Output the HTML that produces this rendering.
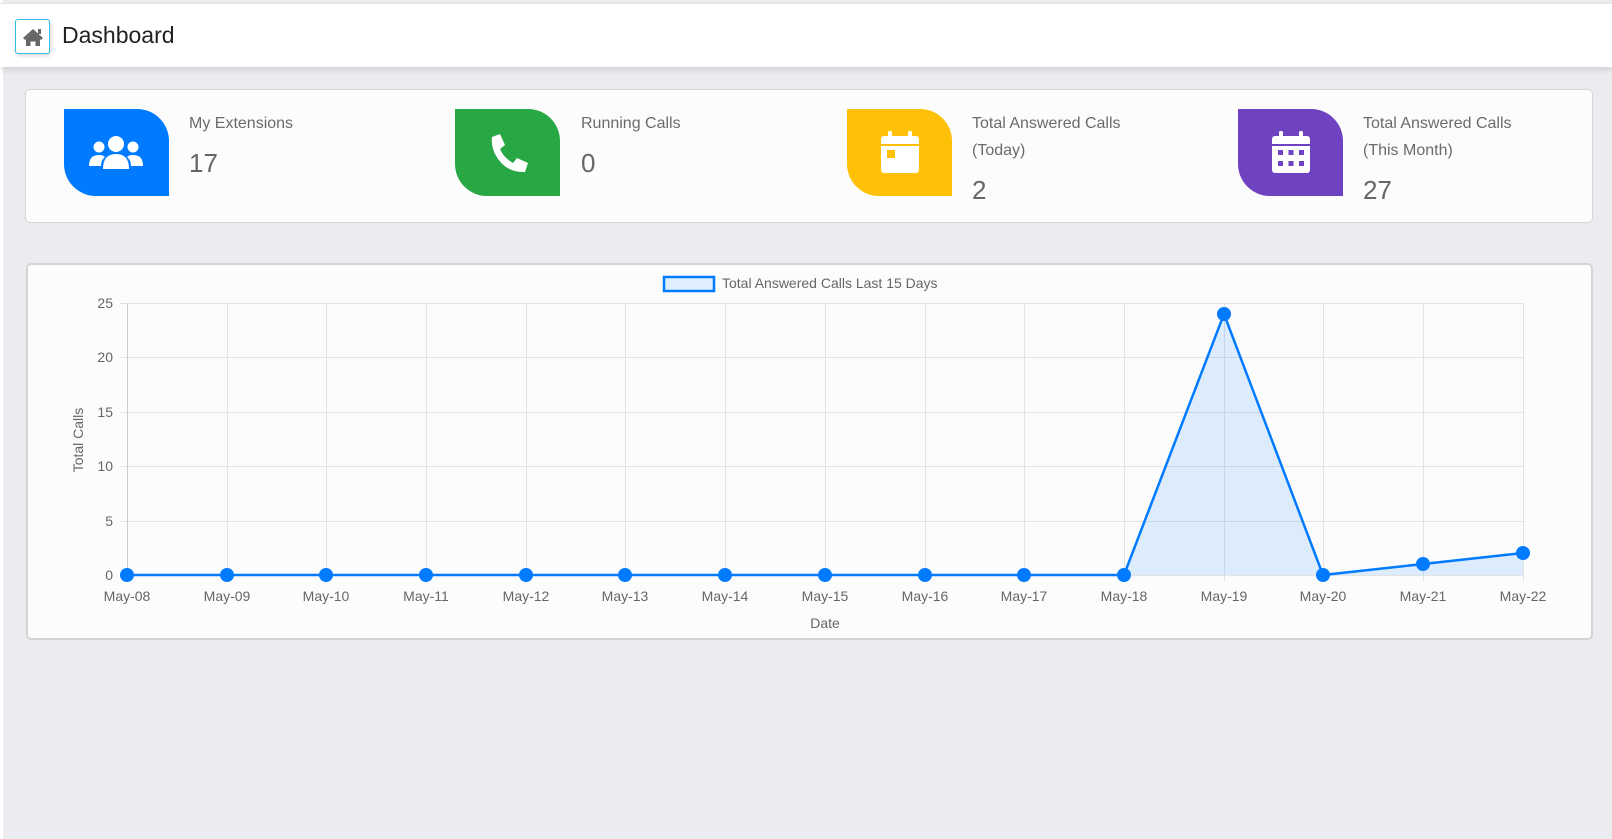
<!DOCTYPE html>
<html><head><meta charset="utf-8"><style>
*{box-sizing:border-box;margin:0;padding:0}
body{width:1612px;height:839px;background:#ebecf0;font-family:"Liberation Sans",sans-serif;position:relative;overflow:hidden}
.left{position:absolute;left:0;top:0;width:3px;height:839px;background:#fff}
.hdr{position:absolute;left:0;top:3px;width:1612px;height:64px;background:#fff;border-top:1px solid #e4e4e4;box-shadow:0 3px 6px rgba(0,0,0,.12)}
.home{position:absolute;left:15px;top:15px;width:35px;height:35px;border:1px solid #2fc0e8;border-radius:3px;box-shadow:1px 2px 4px rgba(0,0,0,.15);background:#fff}
.title{position:absolute;left:62px;top:18px;font-size:23px;color:#222}
.card{position:absolute;left:25px;top:89px;width:1568px;height:134px;background:#fcfcfc;border:1px solid #d6d6d6;border-radius:5px}
.ib{position:absolute;top:19px;width:105px;height:87px;border-radius:0 32px 0 32px}
.t{position:absolute;font-size:16px;color:#6b6b6b;line-height:27px}
.n{position:absolute;font-size:26px;color:#666}
.chart{position:absolute;left:26px;top:263px;width:1567px;height:377px;background:#fcfcfc;border:2px solid #d4d4d4;border-radius:5px}
</style></head><body>
<div class="left"></div>
<div class="hdr">
<div class="home"><svg width="35" height="35" viewBox="0 0 35 35"><path d="M7 18 L17 9 L27 18 L25 20 L17 13 L9 20Z" fill="#666"/><path d="M10 19 L17 13 L24 19 V26 H19.5 V21.5 H14.5 V26 H10Z" fill="#666"/><rect x="22" y="9" width="3" height="5" fill="#666"/></svg></div>
<div class="title">Dashboard</div>
</div>
<div class="card">
<div class="ib" style="left:38px;background:#007bff"><svg width="105" height="87" viewBox="0 0 105 87"><g fill="#fff"><circle cx="52" cy="35" r="8"/><circle cx="35" cy="38" r="5.5"/><circle cx="69" cy="38" r="5.5"/><path d="M39 60 Q39 45 52 45 Q65 45 65 60Z"/><path d="M25 57 Q25 46 35 46 Q39 46 41 48 Q37 51 37 57Z"/><path d="M79 57 Q79 46 69 46 Q65 46 63 48 Q67 51 67 57Z"/></g></svg></div>
<div class="t" style="left:163px;top:20px">My Extensions</div>
<div class="n" style="left:163px;top:58px">17</div>
<div class="ib" style="left:429px;background:#28a745"><svg width="105" height="87" viewBox="0 0 105 87"><path d="M37 28 L45 25 L50 36 L45 40 Q49 49 58 54 L62 49 L73 54 L70 63 Q50 64 40 45 Q36 37 37 28Z" fill="#fff"/></svg></div>
<div class="t" style="left:555px;top:20px">Running Calls</div>
<div class="n" style="left:555px;top:58px">0</div>
<div class="ib" style="left:821px;background:#ffc107"><svg width="105" height="87" viewBox="0 0 105 87"><g fill="#fff"><rect x="34" y="27" width="38" height="37" rx="3"/><rect x="41" y="22" width="4" height="9" rx="1.5"/><rect x="61" y="22" width="4" height="9" rx="1.5"/></g><rect x="34" y="35" width="38" height="2" fill="#ffc107"/><rect x="40" y="41" width="8" height="8" fill="#ffc107"/></svg></div>
<div class="t" style="left:946px;top:20px">Total Answered Calls<br>(Today)</div>
<div class="n" style="left:946px;top:85px">2</div>
<div class="ib" style="left:1212px;background:#6f42c1"><svg width="105" height="87" viewBox="0 0 105 87"><g fill="#fff"><rect x="34" y="27" width="38" height="37" rx="3"/><rect x="41" y="22" width="4" height="9" rx="1.5"/><rect x="61" y="22" width="4" height="9" rx="1.5"/></g><rect x="34" y="35" width="38" height="2" fill="#6f42c1"/><g fill="#6f42c1"><rect x="40" y="41" width="5" height="5"/><rect x="50.5" y="41" width="5" height="5"/><rect x="61" y="41" width="5" height="5"/><rect x="40" y="52" width="5" height="5"/><rect x="50.5" y="52" width="5" height="5"/><rect x="61" y="52" width="5" height="5"/></g></svg></div>
<div class="t" style="left:1337px;top:20px">Total Answered Calls<br>(This Month)</div>
<div class="n" style="left:1337px;top:85px">27</div>
</div>
<div class="chart"></div>
<svg style="position:absolute;left:0;top:0" width="1612" height="839" font-family="Liberation Sans, sans-serif">
<rect x="664" y="277" width="50" height="14" fill="#e0effd" stroke="#007bff" stroke-width="2.5"/>
<text x="722" y="288" font-size="14" fill="#666">Total Answered Calls Last 15 Days</text>
<g stroke="#e3e3e3" stroke-width="1">
<line x1="120" y1="303.5" x2="1524" y2="303.5"/><line x1="120" y1="357.5" x2="1524" y2="357.5"/><line x1="120" y1="412.5" x2="1524" y2="412.5"/><line x1="120" y1="466.5" x2="1524" y2="466.5"/><line x1="120" y1="521.5" x2="1524" y2="521.5"/><line x1="120" y1="575.5" x2="1524" y2="575.5"/>
</g>
<g stroke="#e3e3e3">
<line x1="127.5" y1="303" x2="127.5" y2="582"/><line x1="227.5" y1="303" x2="227.5" y2="582"/><line x1="326.5" y1="303" x2="326.5" y2="582"/><line x1="426.5" y1="303" x2="426.5" y2="582"/><line x1="526.5" y1="303" x2="526.5" y2="582"/><line x1="625.5" y1="303" x2="625.5" y2="582"/><line x1="725.5" y1="303" x2="725.5" y2="582"/><line x1="825.5" y1="303" x2="825.5" y2="582"/><line x1="925.5" y1="303" x2="925.5" y2="582"/><line x1="1024.5" y1="303" x2="1024.5" y2="582"/><line x1="1124.5" y1="303" x2="1124.5" y2="582"/><line x1="1224.5" y1="303" x2="1224.5" y2="582"/><line x1="1323.5" y1="303" x2="1323.5" y2="582"/><line x1="1423.5" y1="303" x2="1423.5" y2="582"/><line x1="1523.5" y1="303" x2="1523.5" y2="582"/>
</g>
<line x1="127.5" y1="303" x2="127.5" y2="582" stroke="#ccc"/>
<g font-size="14" fill="#666" text-anchor="end">
<text x="113" y="308">25</text><text x="113" y="362">20</text><text x="113" y="417">15</text><text x="113" y="471">10</text><text x="113" y="526">5</text><text x="113" y="580">0</text>
</g>
<text transform="translate(83,440) rotate(-90)" font-size="14" fill="#666" text-anchor="middle">Total Calls</text>
<g font-size="14" fill="#666" text-anchor="middle">
<text x="127" y="601">May-08</text><text x="227" y="601">May-09</text><text x="326" y="601">May-10</text><text x="426" y="601">May-11</text><text x="526" y="601">May-12</text><text x="625" y="601">May-13</text><text x="725" y="601">May-14</text><text x="825" y="601">May-15</text><text x="925" y="601">May-16</text><text x="1024" y="601">May-17</text><text x="1124" y="601">May-18</text><text x="1224" y="601">May-19</text><text x="1323" y="601">May-20</text><text x="1423" y="601">May-21</text><text x="1523" y="601">May-22</text>
<text x="825" y="628">Date</text>
</g>
<path d="M1124 575 L1224 314 L1323 575 L1423 564 L1523 553 L1523 575Z" fill="#007bff" fill-opacity="0.12"/>
<polyline points="127,575 1124,575 1224,314 1323,575 1423,564 1523,553" fill="none" stroke="#007bff" stroke-width="2.5"/>
<g fill="#007bff">
<circle cx="127" cy="575" r="7"/><circle cx="227" cy="575" r="7"/><circle cx="326" cy="575" r="7"/><circle cx="426" cy="575" r="7"/><circle cx="526" cy="575" r="7"/><circle cx="625" cy="575" r="7"/><circle cx="725" cy="575" r="7"/><circle cx="825" cy="575" r="7"/><circle cx="925" cy="575" r="7"/><circle cx="1024" cy="575" r="7"/><circle cx="1124" cy="575" r="7"/><circle cx="1224" cy="314" r="7"/><circle cx="1323" cy="575" r="7"/><circle cx="1423" cy="564" r="7"/><circle cx="1523" cy="553" r="7"/>
</g>
</svg>
</body></html>
